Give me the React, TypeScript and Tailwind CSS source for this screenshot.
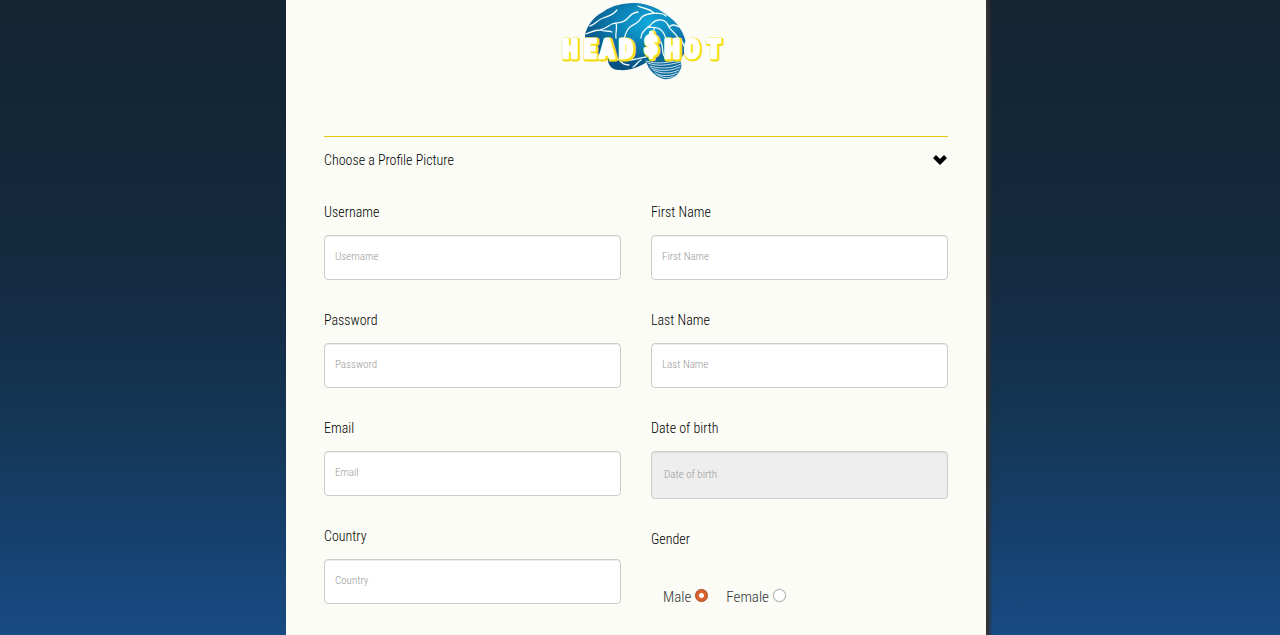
import type { InputHTMLAttributes } from "react";

function Wordmark() {
  return (
    <>
      <text x="20 40 57 76" y="58" fontSize="25">HEAD</text>
      <text x="101" y="55" fontSize="28">$</text>
      <text x="122 142 164" y="58" fontSize="25">HOT</text>
    </>
  );
}

function Logo() {
  return (
    <svg viewBox="0 0 190 90" className="h-[90px] w-[190px]" role="img" aria-label="Head Shot">
      <defs>
        <radialGradient id="cortex" cx="0.62" cy="0.3" r="0.65">
          <stop offset="0" stopColor="#12a9dc" />
          <stop offset="0.45" stopColor="#0b84b8" />
          <stop offset="1" stopColor="#075283" />
        </radialGradient>
      </defs>
      <path
        d="M35 36C36 27 43 17 53 12C62 5 74 3 86 3C99 4 110 9 118 16C127 22 134 32 136 43C136 51 133 58 128 61C120 65 108 63 99 60C92 66 82 71 69 70C62 70 58 65 58 60C46 58 37 50 35 36Z"
        fill="url(#cortex)"
      />
      <path
        d="M96 61C103 57 120 57 130 60C132 64 132 68 129 72C126 77 120 80 114 79C105 77 98 69 96 61Z"
        fill="#0d6a9b"
      />
      <g fill="none" stroke="#f3fbfb" strokeLinecap="round" strokeLinejoin="round">
        <path
          strokeWidth="1.3"
          d="M36 34C42 32 44 30 50 30C55 29 58 26 62 24C67 22 72 24 77 19C81 15 82 13 88 12M40 26C45 25 47 20 53 18C58 16 62 16 67 10M50 30C54 32 58 30 62 32M66 23C68 28 65 32 66 38M74 38C77 33 75 31 80 27C84 24 89 23 91 18C94 14 99 14 104 13M88 6C94 9 99 8 104 13C109 14 112 12 116 16M91 38C91 32 95 30 98 27C103 24 103 20 109 20C114 19 117 22 119 27C121 31 126 33 128 38M98 27C102 28 107 26 111 30C115 33 115 37 117 42M104 28C105 32 102 34 103 37M119 27C122 24 126 25 129 27M128 38C131 39 133 42 134 46M117 42C122 43 124 47 129 49M60 61C67 57 73 61 80 60C85 60 89 58 96 57M69 60C72 63 74 65 79 65M83 67C87 65 87 62 91 60M111 42C114 48 111 53 115 57"
        />
        <path
          strokeWidth="0.8"
          d="M96 61C108 65 119 62 130 60M98 63C108 67 119 65 130 62M100 66C110 69 121 69 131 64M101 68C111 72 121 71 130 67M103 70C111 74 121 74 129 70M105 73C112 77 121 76 127 73M108 75C113 78 119 79 124 76"
        />
      </g>
      <g
        fontFamily="'Roboto Condensed', 'Liberation Sans', sans-serif"
        fontWeight="900"
        textAnchor="middle"
        strokeLinejoin="round"
      >
        <g fill="#f5df12" stroke="#f5df12" strokeWidth="5">
          <g transform="translate(1 1)">
            <Wordmark />
          </g>
        </g>
        <g fill="#ffffff" stroke="#ffffff" strokeWidth="2.5">
          <Wordmark />
        </g>
      </g>
    </svg>
  );
}

type FieldProps = InputHTMLAttributes<HTMLInputElement> & { id: string; label: string };

function Field({ id, label, ...rest }: FieldProps) {
  return (
    <div className="flex flex-col">
      <label htmlFor={id} className="mb-3 leading-[22px] text-black">
        {label}
      </label>
      <input
        id={id}
        placeholder={label}
        className="h-[45px] w-full rounded border border-[#ccc] bg-white px-2.5 pb-0.5 text-[11px] text-[#555] shadow-[inset_0_1px_1px_rgba(0,0,0,0.075)] outline-none placeholder:text-[#999] read-only:h-12 read-only:bg-[#eee] read-only:px-3 focus:border-[#66afe9]"
        {...rest}
      />
    </div>
  );
}

function GenderOption({ label, checked }: { label: string; checked?: boolean }) {
  return (
    <label className="flex items-center gap-1 text-[15px] text-[#333]">
      {label}
      <input
        type="radio"
        name="gender"
        defaultChecked={checked}
        className="mb-1 size-[13px] appearance-none rounded-full border border-[#b4b4b4] bg-white shadow-[0_0_1px_rgba(0,0,0,0.3)] checked:border-[#b04a20] checked:bg-[radial-gradient(circle,#fff_0_2px,#d9622f_3px)]"
      />
    </label>
  );
}

export default function App() {
  return (
    <div className="flex min-h-screen justify-center bg-[linear-gradient(#132432_0%,#142a3f_40%,#142e48_52%,#143654_66%,#153f6b_82%,#184b83_100%)] pr-2 font-['Liberation_Sans_Narrow','Arial_Narrow','Roboto_Condensed','Open_Sans_Condensed',sans-serif] text-sm font-light">
      <main className="w-full max-w-[700px] bg-[#fbfcf6] px-[38px] shadow-[3px_0_3px_1px_#333]">
        <header className="flex h-[136px] justify-center pl-[18px]">
          <Logo />
        </header>
        <form>
          <button
            type="button"
            className="flex w-full items-center justify-between border-t border-[#e6c90f] pt-3 text-left leading-[22px] text-black"
          >
            Choose a Profile Picture
            <svg viewBox="0 0 16 10" className="h-2.5 w-4" aria-hidden="true">
              <path d="M1 3L4 0L8 4L12 0L15 3L8 10Z" fill="#000" />
            </svg>
          </button>
          <div className="mt-[30px] grid grid-cols-2 gap-x-[30px]">
            <div className="flex flex-col gap-[29px]">
              <Field id="username" label="Username" />
              <Field id="password" label="Password" type="password" />
              <Field id="email" label="Email" type="email" />
              <Field id="country" label="Country" />
            </div>
            <div className="flex flex-col gap-[29px]">
              <Field id="first-name" label="First Name" />
              <Field id="last-name" label="Last Name" />
              <Field id="birth-date" label="Date of birth" readOnly />
              <fieldset>
                <legend className="leading-[22px] text-black">Gender</legend>
                <div className="mt-9 flex gap-[18px] pl-3 leading-[22px]">
                  <GenderOption label="Male" checked />
                  <GenderOption label="Female" />
                </div>
              </fieldset>
            </div>
          </div>
        </form>
      </main>
    </div>
  );
}
